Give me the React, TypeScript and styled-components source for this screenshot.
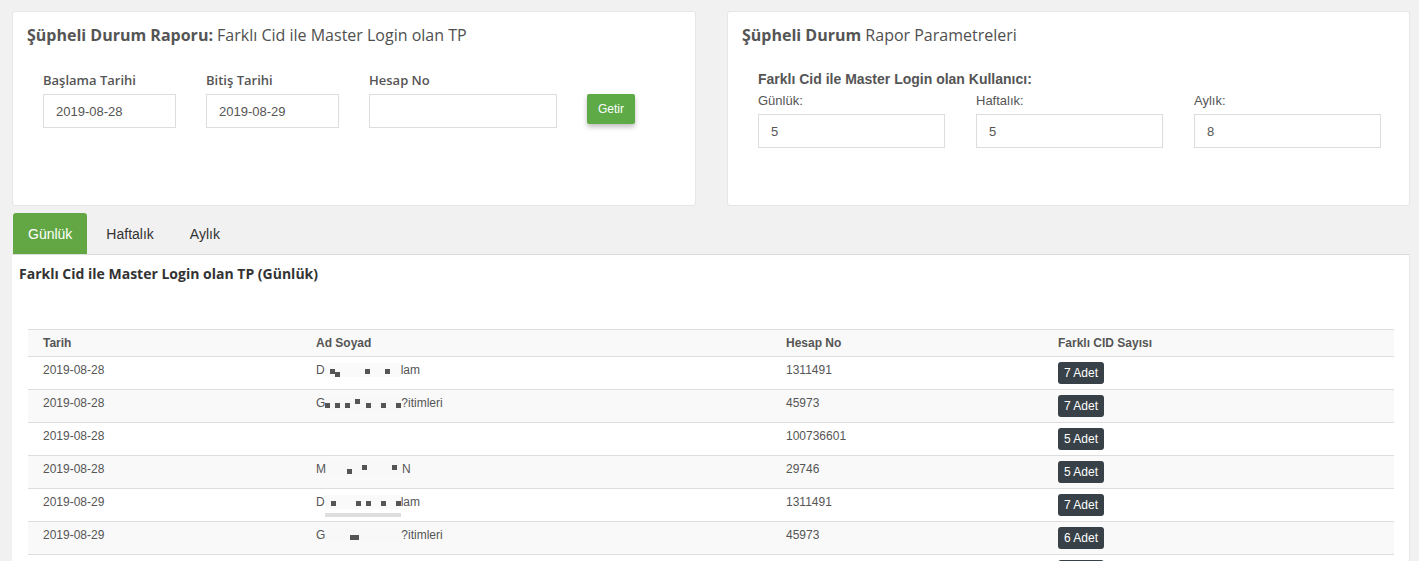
import * as React from 'react';
import styled, { createGlobalStyle } from 'styled-components';

const GlobalStyle = createGlobalStyle`
  html, body {
    margin: 0;
    padding: 0;
    background: #f1f1f1;
    font-family: "Liberation Sans", Arial, sans-serif;
    color: #555;
  }
  * { box-sizing: border-box; }
`;

const Page = styled.div`
  padding: 11px 9px 0 12px;
`;

const TopRow = styled.div`
  display: grid;
  grid-template-columns: 684px 683px;
  column-gap: 31px;
`;

const Card = styled.div`
  background: #fff;
  border: 1px solid #e6e6e6;
  border-radius: 3px;
  height: 195px;
  padding: 13px 14px 0 14px;
`;

const CardTitle = styled.h3`
  margin: 0;
  font-family: "Open Sans", sans-serif;
  font-size: 16px;
  font-weight: 400;
  color: #505050;
  line-height: 20px;

  b {
    font-weight: 700;
    color: #555;
  }
`;

const FormRow = styled.div`
  display: flex;
  align-items: flex-start;
  gap: 30px;
  padding: 26px 0 0 16px;
`;

const Field = styled.div<{ $width: number }>`
  display: flex;
  flex-direction: column;
  width: ${(p) => p.$width}px;
`;

const FieldLabel = styled.label`
  font-family: "Open Sans", sans-serif;
  font-size: 13px;
  font-weight: 600;
  color: #555;
  line-height: 18px;
  margin-bottom: 5px;
`;

const Input = styled.input`
  height: 34px;
  width: 100%;
  border: 1px solid #ddd;
  border-radius: 0;
  padding: 0 12px;
  font-family: "Liberation Sans", Arial, sans-serif;
  font-size: 13px;
  color: #555;
  background: #fff;
  outline: none;
`;

const GetirButton = styled.button`
  margin-top: 23px;
  height: 30px;
  padding: 0 11px;
  border: none;
  border-radius: 2px;
  background: #5daa46;
  color: #fff;
  font-family: "Liberation Sans", Arial, sans-serif;
  font-size: 12px;
  box-shadow: 0 3px 5px rgba(0, 0, 0, 0.25);
`;

const ParamBlock = styled.div`
  padding: 26px 16px 0 16px;
`;

const ParamHeading = styled.div`
  font-size: 14px;
  font-weight: 700;
  color: #555;
  line-height: 16px;
`;

const ParamRow = styled.div`
  display: grid;
  grid-template-columns: repeat(3, 187px);
  column-gap: 31px;
  margin-top: 6px;
`;

const ParamLabel = styled.label`
  display: block;
  font-size: 13px;
  color: #555;
  line-height: 15px;
  margin-bottom: 6px;
`;

const TabBar = styled.div`
  display: flex;
  gap: 2px;
  margin-top: 7px;
  padding-left: 1px;
  height: 41px;
`;

const Tab = styled.div<{ $active?: boolean }>`
  height: 41px;
  padding: 0 ${(p) => (p.$active ? 15 : 17)}px;
  display: flex;
  align-items: center;
  font-size: 14px;
  color: ${(p) => (p.$active ? '#fff' : '#333')};
  background: ${(p) => (p.$active ? '#62a744' : 'transparent')};
  border-radius: 3px 3px 0 0;
`;

const TabPanel = styled.div`
  background: #fff;
  border-top: 1px solid #ddd;
  border-right: 1px solid #e6e6e6;
  padding: 10px 15px 0 7px;
  min-height: 320px;
`;

const PanelTitle = styled.h4`
  margin: 0;
  font-family: "Open Sans", sans-serif;
  font-size: 14px;
  font-weight: 700;
  color: #333;
  line-height: 17px;
`;

const TableWrap = styled.div`
  margin: 47px 0 0 9px;
`;

const Table = styled.table`
  width: 100%;
  border-collapse: collapse;
  font-size: 12px;
  color: #555;
  table-layout: fixed;
`;

const HeadCell = styled.th`
  text-align: left;
  font-weight: 700;
  height: 27px;
  padding: 0 15px;
  background: #f9f9f9;
  border-top: 1px solid #ddd;
  border-bottom: 1px solid #ddd;
  color: #555;
`;

const Row = styled.tr<{ $striped: boolean }>`
  background: ${(p) => (p.$striped ? '#f9f9f9' : '#fff')};
`;

const Cell = styled.td`
  height: 33px;
  padding: 0 15px;
  border-bottom: 1px solid #ddd;
  vertical-align: middle;
  white-space: nowrap;
`;

const CellText = styled.span`
  display: inline-flex;
  align-items: center;
  position: relative;
  top: -3px;
`;

const Badge = styled.span`
  display: inline-block;
  background: #374147;
  color: #fff;
  font-size: 12px;
  line-height: 22px;
  padding: 0 6px;
  border-radius: 3px;
`;

type Mosaic = { squares: [number, number, number?][]; bar?: boolean };

// pixelated (censored) part of a name
const MosaicArt = ({ squares, bar }: Mosaic) => (
  <svg
    width="76"
    height={bar ? 22 : 14}
    viewBox={`0 0 76 ${bar ? 22 : 14}`}
    style={{ marginTop: bar ? 8 : 0 }}
  >
    <rect x="0" y="0" width="76" height="14" fill="#f6f6f6" opacity="0.6" />
    {squares.map(([x, y, w], i) => (
      <rect key={i} x={x} y={y} width={w || 5} height="5" fill="#555" />
    ))}
    {bar && <rect x="0" y="18" width="76" height="4" fill="#dedede" />}
  </svg>
);

type RowData = {
  date: string;
  first: string;
  last: string;
  mosaic?: Mosaic;
  account: string;
  count: number;
};

const rows: RowData[] = [
  { date: '2019-08-28', first: 'D', last: 'lam', mosaic: { squares: [[5, 6], [10, 9], [40, 6], [60, 6]] }, account: '1311491', count: 7 },
  { date: '2019-08-28', first: 'G', last: '?itimleri', mosaic: { squares: [[0, 7], [10, 7], [20, 7], [30, 3], [41, 7], [56, 7], [71, 7]] }, account: '45973', count: 7 },
  { date: '2019-08-28', first: '', last: '', account: '100736601', count: 5 },
  { date: '2019-08-28', first: 'M', last: 'N', mosaic: { squares: [[21, 7], [36, 3], [66, 3]] }, account: '29746', count: 5 },
  { date: '2019-08-29', first: 'D', last: 'lam', mosaic: { squares: [[6, 6], [31, 6], [41, 6], [56, 6], [71, 6]], bar: true }, account: '1311491', count: 7 },
  { date: '2019-08-29', first: 'G', last: '?itimleri', mosaic: { squares: [[25, 7, 9]] }, account: '45973', count: 6 },
  { date: '2019-08-29', first: '', last: '', account: '', count: 5 },
];

const App = () => (
  <Page>
    <GlobalStyle />
    <TopRow>
      <Card>
        <CardTitle>
          <b>Şüpheli Durum Raporu:</b> Farklı Cid ile Master Login olan TP
        </CardTitle>
        <FormRow>
          <Field $width={133}>
            <FieldLabel>Başlama Tarihi</FieldLabel>
            <Input defaultValue="2019-08-28" />
          </Field>
          <Field $width={133}>
            <FieldLabel>Bitiş Tarihi</FieldLabel>
            <Input defaultValue="2019-08-29" />
          </Field>
          <Field $width={188}>
            <FieldLabel>Hesap No</FieldLabel>
            <Input defaultValue="" />
          </Field>
          <GetirButton>Getir</GetirButton>
        </FormRow>
      </Card>
      <Card>
        <CardTitle>
          <b>Şüpheli Durum</b> Rapor Parametreleri
        </CardTitle>
        <ParamBlock>
          <ParamHeading>Farklı Cid ile Master Login olan Kullanıcı:</ParamHeading>
          <ParamRow>
            <div>
              <ParamLabel>Günlük:</ParamLabel>
              <Input defaultValue="5" />
            </div>
            <div>
              <ParamLabel>Haftalık:</ParamLabel>
              <Input defaultValue="5" />
            </div>
            <div>
              <ParamLabel>Aylık:</ParamLabel>
              <Input defaultValue="8" />
            </div>
          </ParamRow>
        </ParamBlock>
      </Card>
    </TopRow>

    <TabBar>
      <Tab $active>Günlük</Tab>
      <Tab>Haftalık</Tab>
      <Tab>Aylık</Tab>
    </TabBar>
    <TabPanel>
      <PanelTitle>Farklı Cid ile Master Login olan TP (Günlük)</PanelTitle>
      <TableWrap>
        <Table>
          <colgroup>
            <col style={{ width: 273 }} />
            <col style={{ width: 470 }} />
            <col style={{ width: 272 }} />
            <col />
          </colgroup>
          <thead>
            <tr>
              <HeadCell>Tarih</HeadCell>
              <HeadCell>Ad Soyad</HeadCell>
              <HeadCell>Hesap No</HeadCell>
              <HeadCell>Farklı CID Sayısı</HeadCell>
            </tr>
          </thead>
          <tbody>
            {rows.map((r, i) => (
              <Row key={i} $striped={i % 2 === 1}>
                <Cell>
                  <CellText>{r.date}</CellText>
                </Cell>
                <Cell>
                  {r.mosaic && (
                    <CellText>
                      {r.first}
                      <MosaicArt {...r.mosaic} />
                      {r.last}
                    </CellText>
                  )}
                </Cell>
                <Cell>
                  <CellText>{r.account}</CellText>
                </Cell>
                <Cell>
                  <Badge>{r.count} Adet</Badge>
                </Cell>
              </Row>
            ))}
          </tbody>
        </Table>
      </TableWrap>
    </TabPanel>
  </Page>
);

export default App;
